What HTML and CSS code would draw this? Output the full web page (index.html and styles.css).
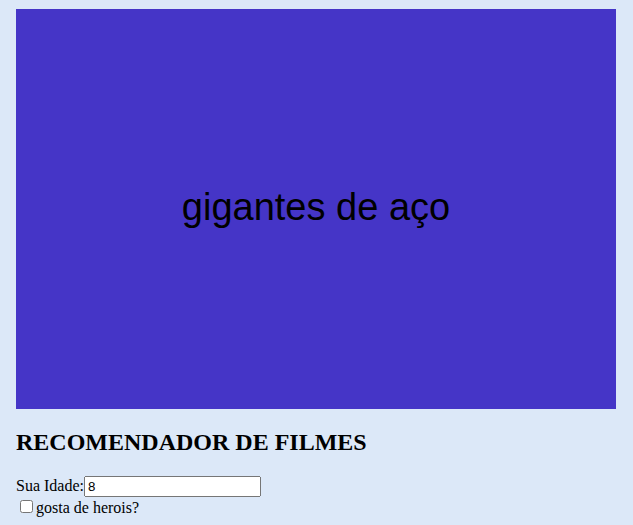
FILE: index.html
```html
<!DOCTYPE html>
<html lang="pt">
<head>
<meta charset="utf-8">
<title>Recomendador de filmes</title>
<link rel="stylesheet" href="styles.css">
</head>
<body>
<div class="page">
  <div class="poster">
    <p class="poster-title">gigantes de aço</p>
  </div>
  <h2 class="heading">RECOMENDADOR DE FILMES</h2>
  <form class="form">
    <label class="age-label" for="idade">Sua Idade:</label><input class="age-input" id="idade" type="text" value="8"><br>
    <input class="hero-check" id="herois" type="checkbox"><label for="herois">gosta de herois?</label>
  </form>
</div>
</body>
</html>
```
FILE: styles.css
```css
html, body {
  margin: 0;
  padding: 0;
}
body {
  background: #dce8f8;
  font-family: "Liberation Serif", "Times New Roman", serif;
  font-size: 16px;
  color: #000;
}
.page {
  padding: 9px 16px 0;
}
.poster {
  width: 600px;
  height: 400px;
  background: #4535c7;
  display: flex;
  align-items: center;
  justify-content: center;
}
.poster-title {
  margin: 0 0 4px;
  font-family: "Liberation Sans", Arial, sans-serif;
  font-size: 38px;
  color: #000;
}
.heading {
  font-size: 24px;
  font-weight: bold;
  margin: 19.92px 0;
}
.form {
  margin: 0;
}
.age-input {
  box-sizing: border-box;
  width: 177px;
  font-family: "Liberation Sans", Arial, sans-serif;
  font-size: 13.33px;
}
.hero-check {
  margin: 3px 3px 3px 4px;
}
```
